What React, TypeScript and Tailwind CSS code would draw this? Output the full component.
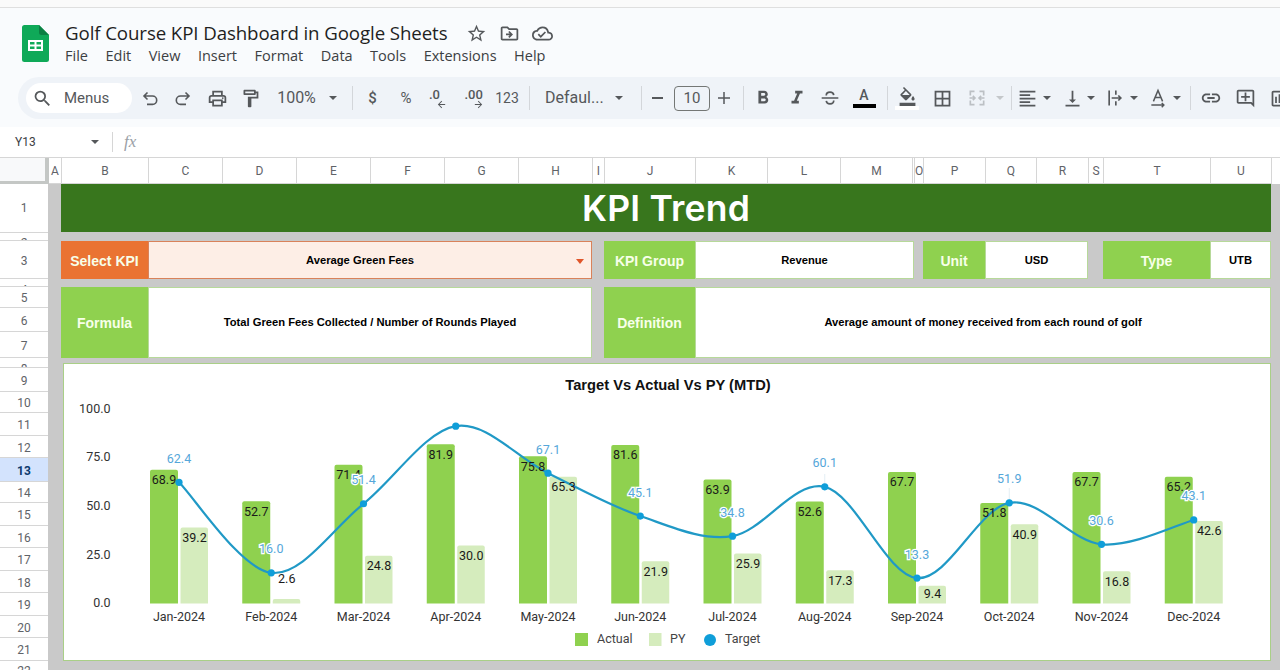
import type { ReactNode } from "react";
import {
  MdArrowBack,
  MdArrowForward,
  MdBorderAll,
  MdFormatAlignLeft,
  MdFormatBold,
  MdFormatItalic,
  MdLink,
  MdOutlineAddComment,
  MdOutlineCloudDone,
  MdOutlineDriveFileMove,
  MdOutlineFormatColorFill,
  MdOutlineFormatPaint,
  MdOutlineInsertChart,
  MdOutlinePrint,
  MdSearch,
  MdStarBorder,
  MdVerticalAlignBottom,
} from "react-icons/md";

const ui = "font-['Roboto',sans-serif]";
const arial = "font-['Liberation_Sans',Arial,sans-serif]";

const menus = ["File", "Edit", "View", "Insert", "Format", "Data", "Tools", "Extensions", "Help"];

const columns = [
  { name: "A", w: "w-[13px]" },
  { name: "B", w: "w-[87px]" },
  { name: "C", w: "w-[74px]" },
  { name: "D", w: "w-[74px]" },
  { name: "E", w: "w-[74px]" },
  { name: "F", w: "w-[74px]" },
  { name: "G", w: "w-[74px]" },
  { name: "H", w: "w-[74px]" },
  { name: "I", w: "w-[12px]" },
  { name: "J", w: "w-[91px]" },
  { name: "K", w: "w-[72px]" },
  { name: "L", w: "w-[73px]" },
  { name: "M", w: "w-[72px]" },
  { name: "", w: "w-[2px]" },
  { name: "O", w: "w-[9px]" },
  { name: "P", w: "w-[62px]" },
  { name: "Q", w: "w-[51px]" },
  { name: "R", w: "w-[52px]" },
  { name: "S", w: "w-[15px]" },
  { name: "T", w: "w-[107px]" },
  { name: "U", w: "w-[61px]" },
];

const rows = [
  { n: 1, h: "h-[49px]", c: "items-center" },
  { n: 2, h: "h-[8px]", c: "items-start pt-[1px]" },
  { n: 3, h: "h-[38px]", c: "items-center pt-[2px]" },
  { n: 4, h: "h-[8px]", c: "items-start pt-[2px]" },
  { n: 5, h: "h-[21px]", c: "items-center pt-[2px]" },
  { n: 6, h: "h-[24px]", c: "items-center pt-[2px]" },
  { n: 7, h: "h-[26px]", c: "items-center pt-[2px]" },
  { n: 8, h: "h-[10px]", c: "items-start pt-[2px]" },
  { n: 9, h: "h-[24px]", c: "items-center pt-[2px]" },
  { n: 10, h: "h-[21px]", c: "items-center pt-[2px]" },
  { n: 11, h: "h-[23px]", c: "items-center pt-[2px]" },
  { n: 12, h: "h-[22px]", c: "items-center pt-[2px]" },
  { n: 13, h: "h-[24px]", c: "items-center pt-[2px]" },
  { n: 14, h: "h-[21px]", c: "items-center pt-[2px]" },
  { n: 15, h: "h-[23px]", c: "items-center pt-[2px]" },
  { n: 16, h: "h-[22px]", c: "items-center pt-[2px]" },
  { n: 17, h: "h-[23px]", c: "items-center pt-[2px]" },
  { n: 18, h: "h-[22px]", c: "items-center pt-[2px]" },
  { n: 19, h: "h-[23px]", c: "items-center pt-[2px]" },
  { n: 20, h: "h-[22px]", c: "items-center pt-[2px]" },
  { n: 21, h: "h-[23px]", c: "items-center pt-[2px]" },
  { n: 22, h: "h-[22px]", c: "items-start pt-[1px]" },
];

const months = [
  { label: "Jan-2024", actual: 68.9, py: 39.2, target: 62.4 },
  { label: "Feb-2024", actual: 52.7, py: 2.6, target: 16.0 },
  { label: "Mar-2024", actual: 71.4, py: 24.8, target: 51.4 },
  { label: "Apr-2024", actual: 81.9, py: 30.0, target: 91.2 },
  { label: "May-2024", actual: 75.8, py: 65.3, target: 67.1 },
  { label: "Jun-2024", actual: 81.6, py: 21.9, target: 45.1 },
  { label: "Jul-2024", actual: 63.9, py: 25.9, target: 34.8 },
  { label: "Aug-2024", actual: 52.6, py: 17.3, target: 60.1 },
  { label: "Sep-2024", actual: 67.7, py: 9.4, target: 13.3 },
  { label: "Oct-2024", actual: 51.8, py: 40.9, target: 51.9 },
  { label: "Nov-2024", actual: 67.7, py: 16.8, target: 30.6 },
  { label: "Dec-2024", actual: 65.2, py: 42.6, target: 43.1 },
];

const baseY = 604;
const unit = 1.95;
const centerX = (i: number) => 179 + i * 92.25;
const valueY = (v: number) => baseY - v * unit;

// smooth line through the targets
function targetPath() {
  const pts = months.map((m, i) => [centerX(i), valueY(m.target)]);
  let d = `M${pts[0][0]} ${pts[0][1]}`;
  for (let i = 0; i < pts.length - 1; i++) {
    const p0 = pts[Math.max(i - 1, 0)];
    const p1 = pts[i];
    const p2 = pts[i + 1];
    const p3 = pts[Math.min(i + 2, pts.length - 1)];
    const c1x = p1[0] + (p2[0] - p0[0]) / 6;
    const c1y = p1[1] + (p2[1] - p0[1]) / 6;
    const c2x = p2[0] - (p3[0] - p1[0]) / 6;
    const c2y = p2[1] - (p3[1] - p1[1]) / 6;
    d += ` C${c1x} ${c1y} ${c2x} ${c2y} ${p2[0]} ${p2[1]}`;
  }
  return d;
}

function Tool({ w, className, children }: { w: string; className?: string; children: ReactNode }) {
  return (
    <div className={`flex h-full shrink-0 items-center justify-center text-[#55585b] ${w} ${className ?? ""}`}>
      {children}
    </div>
  );
}

function Divider({ className }: { className: string }) {
  return <div className={`h-[24px] w-px shrink-0 bg-[#d3d6da] ${className}`} />;
}

function Caret({ light }: { light?: boolean }) {
  return (
    <div
      className={`h-0 w-0 shrink-0 border-x-[4px] border-t-[4px] border-x-transparent ${
        light ? "border-t-[#c4c7ca]" : "border-t-[#55585b]"
      }`}
    />
  );
}

function Toolbar() {
  return (
    <div className="ml-[18px] flex h-[42px] w-[1300px] shrink-0 items-center rounded-l-full bg-[#eff3f8] pl-[8px]">
      <div className="flex h-[30px] w-[106px] shrink-0 items-center rounded-full bg-white pl-[6px] text-[#55585b]">
        <MdSearch size={21} />
        <span className="ml-[11px] text-[15px]">Menus</span>
      </div>
      <Tool w="w-[36px]">
        <svg width="20" height="20" viewBox="0 0 20 20" fill="none" stroke="currentColor" strokeWidth="1.6">
          <path d="M7.5 4.5 4 8l3.5 3.5M4 8h8.5a4.2 4.2 0 0 1 0 8.4H7" />
        </svg>
      </Tool>
      <Tool w="w-[30px]">
        <svg width="20" height="20" viewBox="0 0 20 20" fill="none" stroke="currentColor" strokeWidth="1.6">
          <path d="M12.5 4.5 16 8l-3.5 3.5M16 8H7.5a4.2 4.2 0 0 0 0 8.4H13" />
        </svg>
      </Tool>
      <Tool w="w-[38px]"><MdOutlinePrint size={21} /></Tool>
      <Tool w="w-[28px]"><MdOutlineFormatPaint size={21} /></Tool>
      <Tool w="w-[65px]"><span className="text-[16px]">100%</span></Tool>
      <Caret />
      <Divider className="ml-[15px]" />
      <Tool w="w-[39px]"><span className="text-[15px] font-medium">$</span></Tool>
      <Tool w="w-[28px]"><span className="text-[15px]">%</span></Tool>
      <Tool w="w-[36px]">
        <div className="flex w-[18px] flex-col">
          <span className="text-[13px] font-medium leading-[15px]">.0</span>
          <MdArrowBack size={11} className="-mt-[3px] self-end" />
        </div>
      </Tool>
      <Tool w="w-[36px]">
        <div className="flex w-[19px] flex-col">
          <span className="text-[13px] font-medium leading-[15px]">.00</span>
          <MdArrowForward size={11} className="-mt-[3px] self-end" />
        </div>
      </Tool>
      <Tool w="w-[30px]"><span className="text-[14px]">123</span></Tool>
      <Divider className="ml-[7px]" />
      <Tool w="w-[85px]" className="justify-start pl-[15px]"><span className="text-[16px]">Defaul...</span></Tool>
      <Caret />
      <Divider className="ml-[18px]" />
      <Tool w="w-[30px]"><div className="h-[2px] w-[11px] bg-[#55585b]" /></Tool>
      <div className="ml-[2px] flex h-[25px] w-[36px] shrink-0 items-center justify-center rounded-[4px] border border-[#747775] text-[15px] text-[#55585b]">
        10
      </div>
      <Tool w="w-[28px]">
        <svg width="14" height="14" viewBox="0 0 14 14">
          <path d="M7 1v12M1 7h12" stroke="currentColor" strokeWidth="1.5" />
        </svg>
      </Tool>
      <Divider className="ml-[5px]" />
      <Tool w="w-[38px]"><MdFormatBold size={22} /></Tool>
      <Tool w="w-[30px]"><MdFormatItalic size={22} /></Tool>
      <Tool w="w-[36px]">
        <svg width="20" height="20" viewBox="0 0 24 24" fill="none" stroke="currentColor" strokeWidth="2">
          <path d="M2 12h20M7.5 9c0-2.5 2.2-4 4.5-4s4.2 1 4.5 3.5M16.5 15c0 2.5-2.2 4-4.5 4s-4.2-1-4.5-3.5" />
        </svg>
      </Tool>
      <Tool w="w-[32px]">
        <div className="flex flex-col items-center">
          <span className="text-[14px] font-medium leading-[15px]">A</span>
          <div className="mt-[1px] h-[4px] w-[23px] bg-black" />
        </div>
      </Tool>
      <Divider className="ml-[7px]" />
      <Tool w="w-[38px]">
        <div className="flex flex-col items-center">
          <MdOutlineFormatColorFill size={19} />
          <div className="h-[4px] w-[24px] bg-white" />
        </div>
      </Tool>
      <Tool w="w-[32px]"><MdBorderAll size={21} /></Tool>
      <Tool w="w-[38px]">
        <svg width="20" height="20" viewBox="0 0 24 24" fill="none" stroke="#bcc0c4" strokeWidth="2">
          <path d="M9 4H4v5M15 4h5v5M9 20H4v-5M15 20h5v-5M3 12h6M7 9.5 9.5 12 7 14.5M21 12h-6M17 9.5 14.5 12l2.5 2.5" />
        </svg>
      </Tool>
      <Caret light />
      <Divider className="ml-[7px]" />
      <Tool w="w-[31px]"><MdFormatAlignLeft size={21} /></Tool>
      <Caret />
      <Tool w="w-[36px]" className="pl-[6px]"><MdVerticalAlignBottom size={21} /></Tool>
      <Caret />
      <Tool w="w-[35px]" className="pl-[5px]">
        <svg width="20" height="20" viewBox="0 0 24 24" fill="none" stroke="currentColor" strokeWidth="2">
          <path d="M5 3v18M13 3v5M13 16v5M8 12h11M16 9l3 3-3 3" />
        </svg>
      </Tool>
      <Caret />
      <Tool w="w-[35px]" className="pl-[5px]">
        <svg width="20" height="20" viewBox="0 0 24 24" fill="none" stroke="currentColor" strokeWidth="1.8">
          <path d="M6.5 16 12 3l5.5 13M8.5 11.5h7M4 20.5h15M16.5 18l2.5 2.5-2.5 2.5" />
        </svg>
      </Tool>
      <Caret />
      <Divider className="ml-[9px]" />
      <Tool w="w-[40px]"><MdLink size={22} /></Tool>
      <Tool w="w-[28px]"><MdOutlineAddComment size={21} /></Tool>
      <Tool w="w-[40px]"><MdOutlineInsertChart size={21} /></Tool>
    </div>
  );
}

function Label({ w, bg = "bg-[#8fd14f]", children }: { w: string; bg?: string; children: ReactNode }) {
  return (
    <div className={`flex shrink-0 items-center justify-center pt-[2px] text-[14px] font-bold text-[#f7ffe9] ${w} ${bg}`}>
      {children}
    </div>
  );
}

function Value({ w, children }: { w: string; children: ReactNode }) {
  return (
    <div className={`flex shrink-0 items-center justify-center border border-[#b7d99a] bg-white text-[11.2px] font-bold text-black ${w}`}>
      {children}
    </div>
  );
}

function Chart() {
  return (
    <svg viewBox="64 364 1206 296" className={`block h-full w-full ${ui}`}>
      <text x="668" y="385" textAnchor="middle" dominantBaseline="central" fontSize="14.7" fontWeight="700" fill="#111" className={arial}>
        Target Vs Actual Vs PY (MTD)
      </text>
      {[
        ["100.0", 408],
        ["75.0", 456.5],
        ["50.0", 505],
        ["25.0", 554],
        ["0.0", 602.5],
      ].map(([t, y]) => (
        <text key={t} x="110.5" y={y} textAnchor="end" dominantBaseline="central" fontSize="12.5" fill="#333">
          {t}
        </text>
      ))}
      {months.map((m, i) => {
        const c = centerX(i);
        return (
          <g key={m.label}>
            <path d={`M${c - 29} 603.5V${valueY(m.actual) + 2}q0 -2 2 -2h24q2 0 2 2V603.5Z`} fill="#8fd14f" />
            <path d={`M${c + 1.5} 603.5V${valueY(m.py) + 2}q0 -2 2 -2h23.5q2 0 2 2V603.5Z`} fill="#d5ecbd" />
            <text x={c} y="616" textAnchor="middle" dominantBaseline="central" fontSize="12.5" fill="#333">
              {m.label}
            </text>
          </g>
        );
      })}
      <line x1={centerX(7)} y1="474" x2={centerX(7)} y2="487" stroke="#e3eef4" />
      <line x1={centerX(9)} y1="488" x2={centerX(9)} y2="502" stroke="#e3eef4" />
      <path d={targetPath()} fill="none" stroke="#2099c6" strokeWidth="2.2" />
      {months.map((m, i) => (
        <circle key={m.label} cx={centerX(i)} cy={valueY(m.target)} r="3.6" fill="#0f9ed9" />
      ))}
      {months.map((m, i) => {
        const c = centerX(i);
        const pyY = m.py < 5 ? 578 : m.py < 10 ? 593.5 : valueY(m.py) + 10;
        return (
          <g key={m.label} fontSize="12.5" fill="#1a1a1a" dominantBaseline="central" textAnchor="middle">
            <text x={c - 15} y={valueY(m.actual) + 10}>{m.actual.toFixed(1)}</text>
            <text x={c + 15.5} y={pyY}>{m.py.toFixed(1)}</text>
          </g>
        );
      })}
      {months.map((m, i) =>
        m.label === "Apr-2024" ? null : (
          <text
            key={m.label}
            x={centerX(i)}
            y={valueY(m.target) - 24}
            textAnchor="middle"
            dominantBaseline="central"
            fontSize="12.5"
            fill="#55a7da"
            stroke="#fff"
            strokeWidth="2.5"
            className="[paint-order:stroke]"
          >
            {m.target.toFixed(1)}
          </text>
        )
      )}
      <rect x="575" y="633" width="13" height="13" fill="#8fd14f" />
      <text x="597" y="638.5" dominantBaseline="central" fontSize="12.5" fill="#444">Actual</text>
      <rect x="649" y="633" width="12.5" height="13" fill="#d5ecbd" />
      <text x="670" y="638.5" dominantBaseline="central" fontSize="12.5" fill="#444">PY</text>
      <circle cx="710" cy="640" r="6" fill="#0f9ed9" />
      <text x="725" y="638.5" dominantBaseline="central" fontSize="12.5" fill="#444">Target</text>
    </svg>
  );
}

export default function App() {
  return (
    <div className={`flex h-[670px] w-[1280px] flex-col overflow-hidden bg-[#f9fbfd] text-[#1f1f1f] ${ui}`}>
      <div className="h-[8px] shrink-0 border-b border-[#dfdfdf] bg-[#fafafa]" />

      {/* title + menus */}
      <div className="flex h-[69px] shrink-0 pl-[22px] pt-[17px]">
        <svg width="27" height="37" viewBox="0 0 27 37" className="shrink-0">
          <path d="M2.5 0H17l10 10v24.5a2.5 2.5 0 0 1-2.5 2.5h-22A2.5 2.5 0 0 1 0 34.5v-32A2.5 2.5 0 0 1 2.5 0Z" fill="#0fa958" />
          <path d="M17 0l10 10h-7.5A2.5 2.5 0 0 1 17 7.5Z" fill="#0b8043" />
          <rect x="6" y="15" width="15" height="11" fill="#fff" />
          <path d="M8 17h4.5v2.5H8zM14.5 17H19v2.5h-4.5zM8 21.5h4.5V24H8zM14.5 21.5H19V24h-4.5z" fill="#0fa958" />
        </svg>
        <div className="-mt-[4px] ml-[16px] flex flex-col">
          <div className="flex h-[25px] items-center">
            <span className="font-['Open_Sans',sans-serif] text-[18.7px] tracking-[-0.1px] text-[#1f1f1f]">
              Golf Course KPI Dashboard in Google Sheets
            </span>
            <div className="ml-[19px] flex items-center gap-[12px] text-[#55585b]">
              <MdStarBorder size={21} />
              <MdOutlineDriveFileMove size={21} />
              <MdOutlineCloudDone size={21} />
            </div>
          </div>
          <div className="flex h-[20px] items-center gap-[17.5px] font-['Open_Sans',sans-serif] text-[14.5px] text-[#3c4043]">
            {menus.map((m) => (
              <span key={m}>{m}</span>
            ))}
          </div>
        </div>
      </div>

      <Toolbar />

      {/* name box + formula bar */}
      <div className="mt-[8px] flex h-[31px] shrink-0 items-center border-b border-[#d6d6d6] bg-white text-[12px]">
        <span className="ml-[15px] w-[76px] text-[#3c4043]">Y13</span>
        <Caret />
        <div className="ml-[13px] h-[20px] w-px bg-[#d6d6d6]" />
        <span className="ml-[11px] font-['Liberation_Serif',serif] text-[17px] italic text-[#9aa0a6]">fx</span>
      </div>

      {/* column letters */}
      <div className="flex h-[26px] shrink-0 bg-white text-[12px] text-[#5f6368]">
        <div className="w-[49px] shrink-0 border-b-[3px] border-r-[4px] border-[#c4c7c5] bg-[#f8f9fa]" />
        {columns.map((c) => (
          <div key={c.name + c.w} className={`flex shrink-0 items-center justify-center overflow-hidden border-r border-b border-[#d6d6d6] ${c.w}`}>
            {c.name}
          </div>
        ))}
        <div className="flex-1 bg-white" />
      </div>

      <div className="flex min-h-0 flex-1">
        {/* row numbers */}
        <div className="flex w-[48px] shrink-0 flex-col overflow-hidden bg-white text-[12px] text-[#5f6368]">
          {rows.map((r) => (
            <div
              key={r.n}
              className={`flex shrink-0 justify-center overflow-hidden border-b border-[#d6d6d6] ${r.h} ${r.c} ${
                r.n === 13 ? "bg-[#d3e3fd] font-bold text-[#0b3a6e]" : ""
              }`}
            >
              {r.n}
            </div>
          ))}
        </div>

        {/* sheet */}
        <div className={`flex min-w-0 flex-1 flex-col bg-[#c9c9c9] pl-[13px] ${arial}`}>
          <div className="flex h-[48px] w-[1210px] shrink-0 items-center justify-center bg-[#38761d] pt-[1px] font-['Inter',sans-serif] text-[35.5px] font-semibold tracking-[0.2px] text-white">
            KPI Trend
          </div>

          <div className="mt-[9px] flex h-[38px] w-[1210px] shrink-0">
            <Label w="w-[87px]" bg="bg-[#ea7332]">Select KPI</Label>
            <div className="relative flex w-[444px] shrink-0 items-center justify-center border border-[#d9825a] bg-[#fdeee6] pr-[20px] text-[11.2px] font-bold text-black">
              Average Green Fees
              <div className="absolute right-[7px] top-[17px] h-0 w-0 border-x-[4px] border-t-[5px] border-x-transparent border-t-[#e0562a]" />
            </div>
            <Label w="ml-[12px] w-[91px]">KPI Group</Label>
            <Value w="w-[219px]">Revenue</Value>
            <Label w="ml-[9px] w-[62px]">Unit</Label>
            <Value w="w-[103px]">USD</Value>
            <Label w="ml-[15px] w-[107px]">Type</Label>
            <Value w="w-[61px]">UTB</Value>
          </div>

          <div className="mt-[8px] flex h-[71px] w-[1210px] shrink-0">
            <Label w="w-[87px]">Formula</Label>
            <Value w="w-[444px]">Total Green Fees Collected / Number of Rounds Played</Value>
            <Label w="ml-[12px] w-[91px]">Definition</Label>
            <Value w="w-[576px]">Average amount of money received from each round of golf</Value>
          </div>

          <div className="ml-[2px] mt-[5px] h-[298px] w-[1208px] shrink-0 border border-[#a9cf87] bg-white">
            <Chart />
          </div>
        </div>
      </div>
    </div>
  );
}
